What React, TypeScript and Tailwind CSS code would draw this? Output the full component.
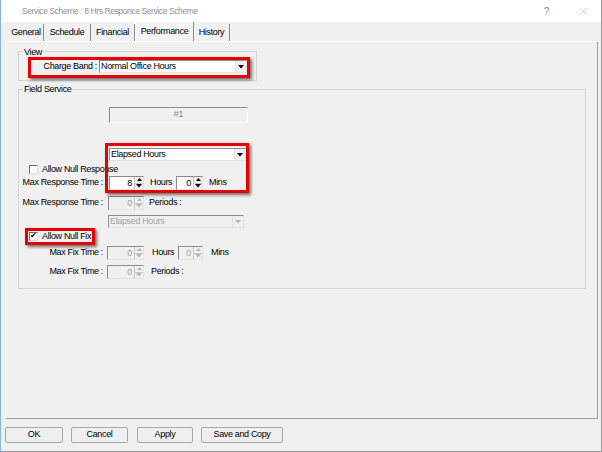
import { X } from 'lucide-react';

const FONT = { fontFamily: '"Liberation Sans", Arial, sans-serif' };

function DownArrow({ disabled }: { disabled?: boolean }) {
  return (
    <svg width="6" height="4" viewBox="0 0 6 4">
      <path d="M0 0 L6 0 L3 3.5 Z" fill={disabled ? '#b4b4b4' : '#000'} />
    </svg>
  );
}

function UpArrow({ disabled }: { disabled?: boolean }) {
  return (
    <svg width="5" height="3" viewBox="0 0 5 3">
      <path d="M0 3 L5 3 L2.5 0 Z" fill={disabled ? '#b4b4b4' : '#000'} />
    </svg>
  );
}

function Combo({ text, className, disabled }: { text: string; className: string; disabled?: boolean }) {
  return (
    <div
      className={`flex h-[13px] items-center border border-t-[#8c8c8c] border-l-[#8c8c8c] border-r-[#e3e3e3] border-b-[#e3e3e3] ${
        disabled ? 'bg-[#f0f0f0] text-[#a3a3a3]' : 'bg-white text-black'
      } ${className}`}
    >
      <span className="flex-1 pl-[1px] leading-[11px]">{text}</span>
      <span className="flex h-full w-[11px] items-center justify-center border-l border-[#e0e0e0] bg-[#f0f0f0]">
        <DownArrow disabled={disabled} />
      </span>
    </div>
  );
}

function Spin({ value, className, disabled }: { value: string; className: string; disabled?: boolean }) {
  return (
    <div
      className={`flex h-[14px] border border-t-[#8c8c8c] border-l-[#8c8c8c] border-r-[#e3e3e3] border-b-[#e3e3e3] ${
        disabled ? 'bg-[#f0f0f0] text-[#a3a3a3]' : 'bg-white text-black'
      } ${className}`}
    >
      <span className="flex-1 pr-[2px] text-right leading-[12px]">{value}</span>
      <span className="flex w-[9px] flex-col border-l border-[#c8c8c8] bg-[#f0f0f0]">
        <span className="flex flex-1 items-center justify-center border-b border-[#c8c8c8]">
          <UpArrow disabled={disabled} />
        </span>
        <span className="flex flex-1 items-center justify-center">
          <DownArrow disabled={disabled} />
        </span>
      </span>
    </div>
  );
}

function Check({ checked, label }: { checked?: boolean; label: string }) {
  return (
    <div className="ml-[10px] flex h-[10px] items-center">
      <span className="flex h-[9px] w-[9px] items-center justify-center border border-t-[#6e6e6e] border-l-[#6e6e6e] border-r-[#dcdcdc] border-b-[#dcdcdc] bg-white text-[8px] leading-none">
        {checked ? '✔' : ''}
      </span>
      <span className="ml-[4px] leading-[10px]">{label}</span>
    </div>
  );
}

function Tab({ label, className, active }: { label: string; className: string; active?: boolean }) {
  return (
    <div
      className={`flex items-center justify-center ${
        active
          ? 'h-[19px] border-l border-white border-r border-r-[#8a8a8a] bg-[#f4f4f4]'
          : 'h-[17px] border-r border-[#8a8a8a]'
      } ${className}`}
    >
      {label}
    </div>
  );
}

function Button({ label, className }: { label: string; className: string }) {
  return (
    <div
      className={`flex h-[16px] items-center justify-center rounded-[2px] border border-[#a8a8a8] bg-[#efefef] ${className}`}
    >
      {label}
    </div>
  );
}

function RedMark({ className }: { className: string }) {
  return (
    <div
      className={`pointer-events-none absolute border-[3px] border-[#e60000] shadow-[2px_2px_3px_rgba(0,0,0,0.55)] ${className}`}
    />
  );
}

export default function App() {
  return (
    <div
      className="relative h-[452px] w-[602px] overflow-hidden border-b border-l border-r border-l-[#8cb3dc] border-r-[#9a9a9a] border-b-[#9a9a9a] bg-[#f0f0f0] text-[9px] tracking-[-0.35px] text-black"
      style={FONT}
    >
      {/* title bar */}
      <div className="flex h-[22px] items-center bg-white pl-[21px] pr-[12px] text-[8.5px] tracking-[-0.4px] text-[#8f8f8f]">
        <span className="flex-1">Service Scheme : 8 Hrs Responce Service Scheme</span>
        <span className="mr-[29px] text-[10px]">?</span>
        <X size={11} strokeWidth={1} color="#8f8f8f" />
      </div>

      {/* tabs */}
      <div className="flex h-[19px] items-end pl-[5px]">
        <Tab label="General" className="w-[38px] pl-[3px]" />
        <Tab label="Schedule" className="w-[47px]" />
        <Tab label="Financial" className="w-[44px]" />
        <Tab label="Performance" className="w-[59px]" active />
        <Tab label="History" className="w-[36px]" />
      </div>

      {/* tab page */}
      <div className="ml-[4px] h-[378px] w-[593px] border border-t-white border-l-white border-r-[#a0a0a0] border-b-[#a0a0a0]">
        {/* View group */}
        <div className="ml-[12px] mt-[9px] h-[30px] w-[239px] border border-[#d6d6d6]">
          <span className="-mt-[5px] ml-[4px] block w-fit bg-[#f0f0f0] px-[1px] leading-[11px]">View</span>
          <div className="mt-[2px] flex h-[13px] items-center">
            <span className="w-[78px] text-right">Charge Band :</span>
            <Combo text="Normal Office Hours" className="ml-[2px] w-[148px]" />
          </div>
        </div>

        {/* Field Service group */}
        <div className="ml-[12px] mt-[8px] h-[200px] w-[568px] border border-[#d6d6d6]">
          <span className="-mt-[6px] ml-[4px] block w-fit bg-[#f0f0f0] px-[1px] leading-[11px]">Field Service</span>

          <div className="ml-[90px] mt-[12px] flex h-[16px] w-[139px] items-center justify-center border border-t-[#8c8c8c] border-l-[#8c8c8c] border-r-white border-b-white text-[#8a8a8a]">
            #1
          </div>

          <Combo text="Elapsed Hours" className="ml-[90px] mt-[25px] w-[137px]" />

          <div className="mt-[3px]">
            <Check label="Allow Null Response" />
          </div>

          <div className="mt-[2px] flex h-[14px] items-center">
            <span className="w-[84px] text-right">Max Response Time :</span>
            <Spin value="8" className="ml-[6px] w-[35px]" />
            <span className="ml-[6px] w-[26px]">Hours</span>
            <Spin value="0" className="w-[27px]" />
            <span className="ml-[6px]">Mins</span>
          </div>

          <div className="mt-[6px] flex h-[14px] items-center">
            <span className="w-[84px] text-right">Max Response Time :</span>
            <Spin value="0" className="ml-[5px] w-[36px]" disabled />
            <span className="ml-[5px]">Periods :</span>
          </div>

          <Combo text="Elapsed Hours" className="ml-[89px] mt-[5px] w-[136px]" disabled />

          <div className="mt-[3px]">
            <Check checked label="Allow Null Fix" />
          </div>

          <div className="mt-[5px] flex h-[14px] items-center">
            <span className="w-[84px] text-right">Max Fix Time :</span>
            <Spin value="0" className="ml-[4px] w-[37px]" disabled />
            <span className="ml-[8px] w-[26px]">Hours</span>
            <Spin value="0" className="w-[25px]" disabled />
            <span className="ml-[8px]">Mins</span>
          </div>

          <div className="mt-[5px] flex h-[14px] items-center">
            <span className="w-[84px] text-right">Max Fix Time :</span>
            <Spin value="0" className="ml-[4px] w-[37px]" disabled />
            <span className="ml-[7px]">Periods :</span>
          </div>
        </div>
      </div>

      {/* buttons */}
      <div className="mt-[8px] flex">
        <Button label="OK" className="ml-[4px] w-[58px]" />
        <Button label="Cancel" className="ml-[8px] w-[57px]" />
        <Button label="Apply" className="ml-[9px] w-[56px]" />
        <Button label="Save and Copy" className="ml-[8px] w-[82px]" />
      </div>

      {/* annotation highlights */}
      <RedMark className="left-[27px] top-[57px] h-[21px] w-[222px]" />
      <RedMark className="left-[104px] top-[143px] h-[50px] w-[144px]" />
      <RedMark className="left-[24px] top-[228px] h-[17px] w-[70px]" />
    </div>
  );
}
